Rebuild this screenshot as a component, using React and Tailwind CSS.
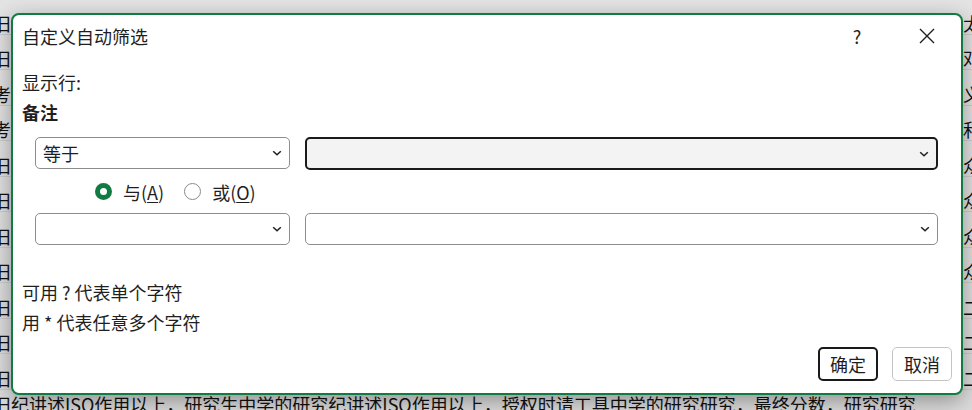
import React from 'react'

const rows = [
  ['旧纪讲述ISO作用以上，研究生中学的研究', '太'],
  ['旧纪讲述ISO作用以上', '邓'],
  ['考试讲述ISO作用以上', '义'],
  ['考试讲述ISO作用以上', '和'],
  ['旧纪讲述ISO作用以上', '众'],
  ['旧纪讲述ISO作用以上', '众'],
  ['旧纪讲述ISO作用以上', '众'],
  ['旧纪讲述ISO作用以上', '众'],
  ['旧纪讲述ISO作用以上', '二'],
  ['旧纪讲述ISO作用以上', '二'],
  ['旧纪讲述ISO作用以上', '二'],
]

function Chevron() {
  return (
    <svg width="10" height="6" viewBox="0 0 10 6" className="shrink-0">
      <path d="M1.2 1.2 5 4.8 8.8 1.2" stroke="#1f1f1f" strokeWidth="1.5" fill="none" />
    </svg>
  )
}

function Select({ text, width, focused }) {
  return (
    <div
      className={`${width} flex items-center justify-between pl-[7px] pr-[7px] rounded-[5px] ${
        focused ? 'h-[33px] border-2 border-[#1a1a1a] bg-[#f3f3f3]' : 'h-[32px] border border-[#8d8d8d] bg-white'
      }`}
    >
      <span>{text}</span>
      <Chevron />
    </div>
  )
}

export default function App() {
  return (
    <div className="relative w-[972px] h-[410px] overflow-hidden bg-gradient-to-b from-[#e4e4e4] to-[#dcdcdc] font-['Noto_Sans_CJK_SC',sans-serif] text-[#111]">
      {/* sheet behind the dialog */}
      <div className="flex flex-col -mt-[1px]">
        {rows.map((r, i) => (
          <div key={i} className="h-[35.5px] border-b border-[#cdcdcd] flex items-end pb-[1px] text-[18px] leading-[20px] whitespace-nowrap">
            <span className="-ml-[7px]">{r[0]}</span>
            <span className="ml-auto mr-[-9px]">{r[1]}{r[1]}</span>
          </div>
        ))}
        <div className="h-[36px] flex items-start pt-[4px] text-[18px] leading-[20px] whitespace-nowrap">
          <span className="-ml-[7px]">旧纪讲述ISO作用以上，研究生中学的研究纪讲述ISO作用以上，授权时请工具中学的研究研究，最终分数，研究研究</span>
        </div>
      </div>

      {/* dialog */}
      <div className="absolute left-[11px] top-[13px] w-[952px] h-[382px] rounded-[8px] border-2 border-[#107c41] bg-white shadow-[0_6px_22px_rgba(0,0,0,0.35)] flex flex-col text-[18px] leading-[24px] text-[#1f1f1f]">
        <div className="h-[42px] flex items-center">
          <span className="ml-[9px]">自定义自动筛选</span>
          <div className="ml-auto mr-[11px] flex items-center gap-[24px]">
            <span className="w-[46px] text-center">?</span>
            <span className="w-[46px] flex justify-center">
              <svg width="16" height="16" viewBox="0 0 16 16">
                <path d="M1 1 15 15M15 1 1 15" stroke="#1f1f1f" strokeWidth="1.4" />
              </svg>
            </span>
          </div>
        </div>

        <div className="ml-[9px] mt-[13px]">显示行:</div>
        <div className="ml-[9px] mt-[6px] font-bold">备注</div>

        <div className="mt-[13px] ml-[22px] flex items-start gap-[15px]">
          <Select text="等于" width="w-[255px]" />
          <Select text="" width="w-[633px]" focused />
        </div>

        <div className="h-[43px] ml-[82px] flex items-center">
          <span className="w-[17px] h-[17px] rounded-full bg-[#107c41] flex items-center justify-center">
            <span className="w-[7px] h-[7px] rounded-full bg-white" />
          </span>
          <span className="ml-[11px]">与(<span className="underline underline-offset-2">A</span>)</span>
          <span className="ml-[20px] w-[17px] h-[17px] rounded-full border-[1.5px] border-[#8a8a8a]" />
          <span className="ml-[11px]">或(<span className="underline underline-offset-2">O</span>)</span>
        </div>

        <div className="ml-[22px] flex items-start gap-[15px]">
          <Select text="" width="w-[255px]" />
          <Select text="" width="w-[633px]" />
        </div>

        <div className="ml-[9px] mt-[35px]">可用 ? 代表单个字符</div>
        <div className="ml-[9px] mt-[6px]">用 * 代表任意多个字符</div>

        <div className="mt-[13px] mr-[9px] flex justify-end gap-[14px]">
          <button className="w-[60px] h-[34px] rounded-[5px] border-2 border-[#1a1a1a] bg-white">确定</button>
          <button className="w-[60px] h-[34px] rounded-[5px] border border-[#c4c4c4] bg-white">取消</button>
        </div>
      </div>
    </div>
  )
}
